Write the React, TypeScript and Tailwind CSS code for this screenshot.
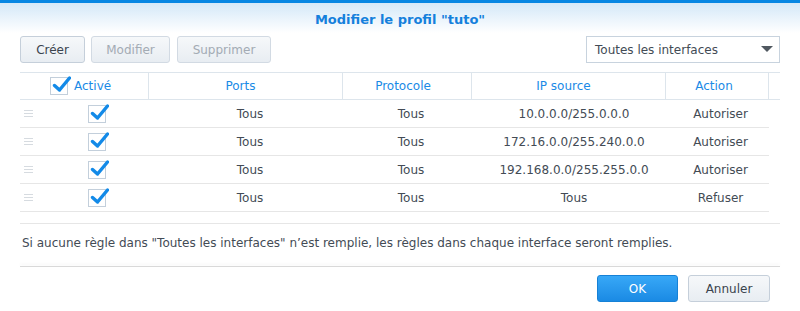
const rows = [
  { ports: "Tous", proto: "Tous", ip: "10.0.0.0/255.0.0.0", action: "Autoriser" },
  { ports: "Tous", proto: "Tous", ip: "172.16.0.0/255.240.0.0", action: "Autoriser" },
  { ports: "Tous", proto: "Tous", ip: "192.168.0.0/255.255.0.0", action: "Autoriser" },
  { ports: "Tous", proto: "Tous", ip: "Tous", action: "Refuser" },
];

function Check() {
  return (
    <span className="relative inline-block w-[18px] h-[18px] border border-[#c3cfdb] bg-white">
      <svg className="absolute left-[1px] top-[-2px]" width="19" height="17" viewBox="0 0 19 17">
        <path d="M2.5 9.5 L7.5 14 L17.5 2" fill="none" stroke="#138ae8" strokeWidth="3.4" strokeLinecap="round" strokeLinejoin="round" />
      </svg>
    </span>
  );
}

function Handle() {
  return (
    <span className="flex flex-col gap-[2px] w-[9px]">
      <span className="h-px bg-[#d6dbe0]" />
      <span className="h-px bg-[#d6dbe0]" />
      <span className="h-px bg-[#d6dbe0]" />
    </span>
  );
}

const cols = "grid grid-cols-[129px_194px_129px_194px_103px]";

export default function App() {
  return (
    <div className="w-[800px] h-[311px] bg-white overflow-hidden text-[12px] text-[#434b55]" style={{ fontFamily: '"DejaVu Sans", Verdana, sans-serif' }}>
      <div className="h-[3px] bg-[#0686e3]" />
      <div className="h-[30px] bg-gradient-to-b from-[#d4e8f8] to-white flex items-center justify-center pt-[3px]">
        <span className="font-bold text-[13px] text-[#1580dc]">Modifier le profil "tuto"</span>
      </div>

      <div className="mx-5 mt-[3px] flex items-center">
        <button className="h-[27px] w-[65px] rounded-[3px] border border-[#c5cfda] bg-gradient-to-b from-[#f6f8fa] to-[#e8edf2] text-[#3a434d]">Créer</button>
        <button className="ml-[6px] h-[27px] w-[79px] rounded-[3px] border border-[#d2dae3] bg-gradient-to-b from-[#f6f8fa] to-[#e8edf2] text-[#a3abb4]">Modifier</button>
        <button className="ml-[7px] h-[27px] w-[94px] rounded-[3px] border border-[#d2dae3] bg-gradient-to-b from-[#f6f8fa] to-[#e8edf2] text-[#a3abb4]">Supprimer</button>
        <div className="ml-auto h-[27px] w-[194px] border border-[#c8d3de] bg-white flex items-center pl-[8px] pr-[6px]">
          <span className="flex-1">Toutes les interfaces</span>
          <svg width="12" height="7" viewBox="0 0 12 7"><path d="M0 0 H12 L6 6 Z" fill="#505860" /></svg>
        </div>
      </div>

      <div className="mx-5 mt-[9px]">
        <div className="flex border-t border-b border-[#dde5ec] h-[28px] text-[#1a8ae6]">
          <div className={cols + " h-full"}>
            <div className="flex items-center pl-[30px] gap-[6px] border-r border-[#dde5ec]">
              <Check />
              <span>Activé</span>
            </div>
            <div className="flex items-center justify-center pr-[10px] border-r border-[#dde5ec]">Ports</div>
            <div className="flex items-center justify-center pr-[8px] border-r border-[#dde5ec]">Protocole</div>
            <div className="flex items-center justify-center pr-[10px] border-r border-[#dde5ec]">IP source</div>
            <div className="flex items-center justify-center pr-[6px] border-r border-[#dde5ec]">Action</div>
          </div>
        </div>

        <div className="w-[749px]">
          {rows.map((r, i) => (
            <div key={i} className={cols + " h-[28px] border-b border-[#e6e6e6]"}>
              <div className="flex items-center pl-1">
                <Handle />
                <span className="ml-[55px] flex"><Check /></span>
              </div>
              <div className="flex items-center justify-center pl-[8px]">{r.ports}</div>
              <div className="flex items-center justify-center pl-[7px]">{r.proto}</div>
              <div className="flex items-center justify-center pl-[10px]">{r.ip}</div>
              <div className="flex items-center justify-center pl-[6px]">{r.action}</div>
            </div>
          ))}
        </div>

        <div className="mt-[11px] border-t border-[#e6e6e6] h-[43px] flex items-center pl-[2px] pb-[5px]">
          Si aucune règle dans "Toutes les interfaces" n’est remplie, les règles dans chaque interface seront remplies.
        </div>
        <div className="h-[1px] bg-[#d9d9d9] shadow-[0_-2px_3px_rgba(0,0,0,0.06)]" />

        <div className="flex justify-end mt-[8px] gap-[10px] pr-[10px]">
          <button className="h-[27px] w-[81px] rounded-[3px] border border-[#1681d6] bg-gradient-to-b from-[#37a8f7] to-[#1a8ae4] text-white">OK</button>
          <button className="h-[27px] w-[82px] rounded-[3px] border border-[#c5cfda] bg-gradient-to-b from-[#f6f8fa] to-[#e8edf2] text-[#3a434d]">Annuler</button>
        </div>
      </div>
    </div>
  );
}
